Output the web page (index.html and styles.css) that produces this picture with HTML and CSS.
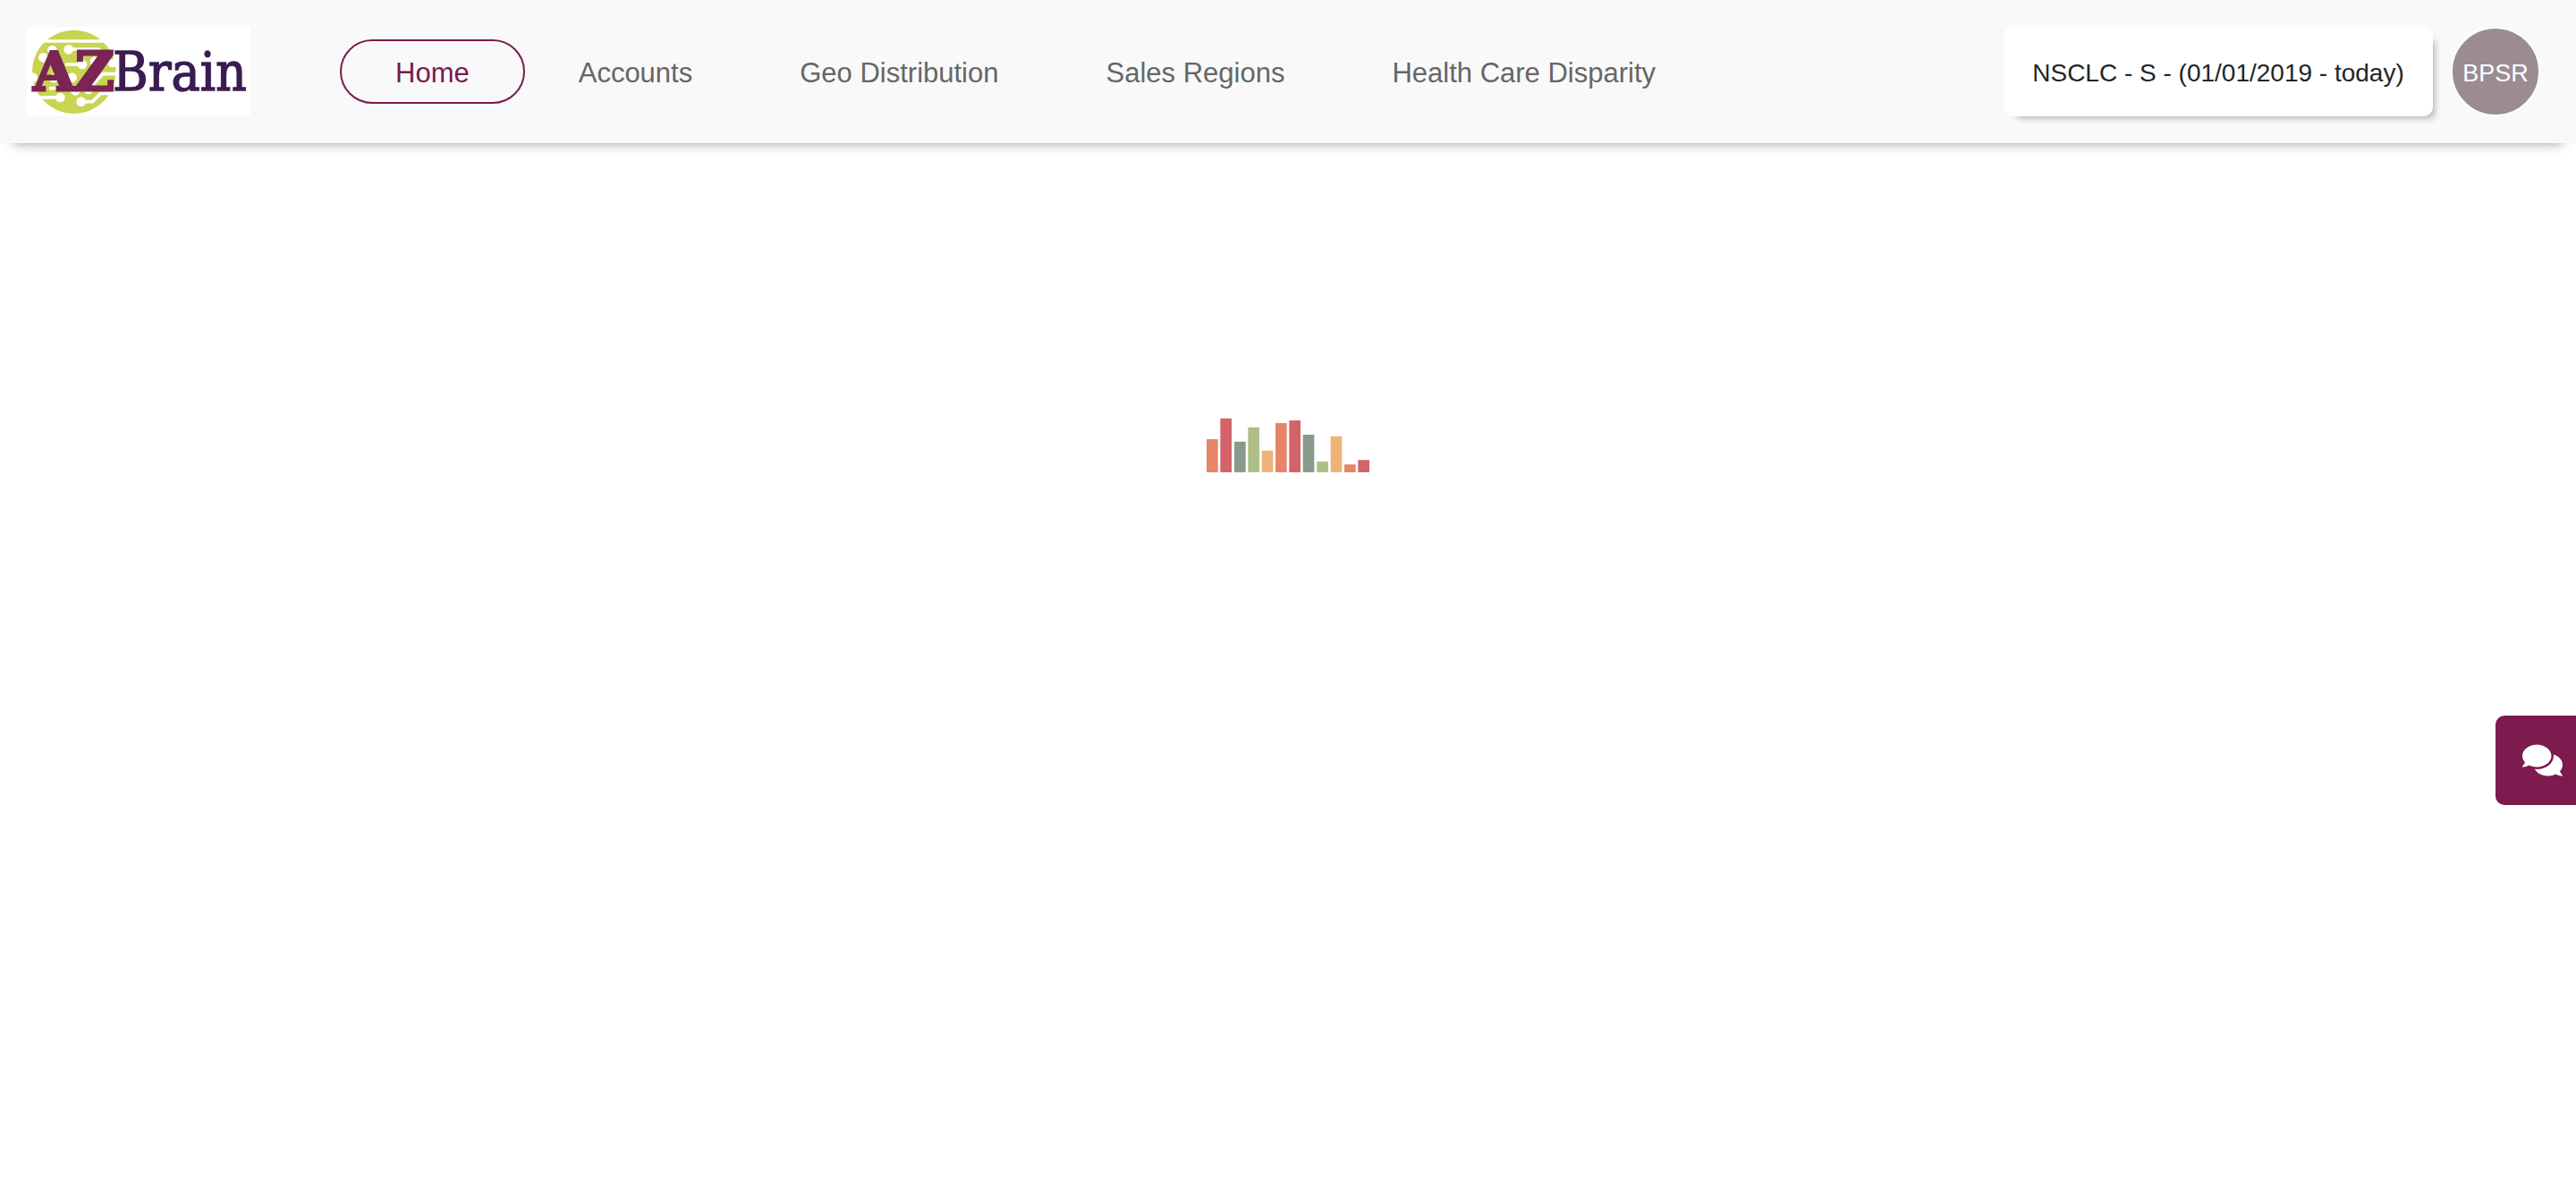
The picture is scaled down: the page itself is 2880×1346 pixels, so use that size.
FILE: index.html
```html
<!DOCTYPE html>
<html lang="en">
<head>
<meta charset="utf-8">
<title>AZBrain</title>
<link rel="stylesheet" href="styles.css">
</head>
<body>
<header class="topbar">
  <a class="logo" href="#" aria-label="AZBrain">
    <svg class="logo-art" viewBox="90 90 750 300">
      <circle cx="248" cy="241" r="140" fill="#c8d452"/>
      <g fill="none" stroke="#fff" stroke-width="11">
        <path d="M140 138H350"/>
        <path d="M230 165H330L352 184"/>
        <path d="M220 216H275"/>
        <path d="M310 285L345 248H400"/>
        <path d="M165 296H200"/>
        <path d="M130 327H202"/>
        <path d="M272 341H310L338 313H372"/>
      </g>
      <g fill="#fff">
        <circle cx="175" cy="168" r="16"/>
        <circle cx="145" cy="193" r="16"/>
        <circle cx="230" cy="166" r="16"/>
        <circle cx="276" cy="216" r="16"/>
        <circle cx="318" cy="206" r="16"/>
        <circle cx="376" cy="212" r="14"/>
        <circle cx="110" cy="260" r="16"/>
        <circle cx="180" cy="262" r="16"/>
        <circle cx="242" cy="260" r="16"/>
        <circle cx="253" cy="304" r="16"/>
        <circle cx="296" cy="300" r="16"/>
        <circle cx="202" cy="327" r="16"/>
        <circle cx="272" cy="341" r="16"/>
      </g>
      <text class="logo-az" x="112" y="303">AZ</text>
      <text class="logo-brain" x="378" y="303">Brain</text>
    </svg>
  </a>
  <nav class="nav">
    <a class="nav-link active" href="#">Home</a>
    <a class="nav-link" href="#">Accounts</a>
    <a class="nav-link" href="#">Geo Distribution</a>
    <a class="nav-link" href="#">Sales Regions</a>
    <a class="nav-link" href="#">Health Care Disparity</a>
  </nav>
  <button class="filter" type="button">NSCLC - S - (01/01/2019 - today)</button>
  <button class="avatar" type="button">BPSR</button>
</header>
<main class="content">
  <svg class="loader" viewBox="57 51 546 183" role="img" aria-label="Loading">
    <g fill="#e68568"><path d="M57 123h38v111h-38zM288 69h38v165h-38zM519 208h38v26h-38z"/></g>
    <g fill="#d26469"><path d="M103 53h38v181h-38zM334 60h38v174h-38zM565 193h38v41h-38z"/></g>
    <g fill="#889b8b"><path d="M150 131h38v103h-38zM380 108h38v126h-38z"/></g>
    <g fill="#afbe88"><path d="M196 83h38v151h-38zM427 198h38v36h-38z"/></g>
    <g fill="#efb378"><path d="M242 161h38v73h-38zM473 113h38v121h-38z"/></g>
  </svg>
</main>
<button class="chat" type="button" aria-label="Chat">
  <svg class="chat-icon" viewBox="0 0 576 512"><path fill="currentColor" d="M416 192c0-88.4-93.1-160-208-160S0 103.6 0 192c0 34.3 14.1 65.9 38 92-13.4 30.2-35.5 54.2-35.8 54.5-2.2 2.3-2.8 5.7-1.5 8.7S4.8 352 8 352c36.6 0 66.9-12.3 88.7-25 32.2 15.7 70.3 25 111.3 25 114.9 0 208-71.6 208-160zm122 220c23.9-26 38-57.7 38-92 0-66.9-53.5-124.2-129.3-148.1.9 6.6 1.3 13.3 1.3 20.1 0 105.9-107.7 192-240 192-10.8 0-21.3-.8-31.7-1.9C207.8 439.6 281.8 480 368 480c41 0 79.1-9.2 111.3-25 21.8 12.7 52.1 25 88.7 25 3.2 0 6.1-1.9 7.3-4.8 1.3-2.9.7-6.3-1.5-8.7-.3-.3-22.4-24.2-35.8-54.5z"/></svg>
</button>
</body>
</html>
```
FILE: styles.css
```css
* {
  box-sizing: border-box;
}

body {
  margin: 0;
  background: #fff;
  color: #212529;
  font-family: "Liberation Sans", Arial, sans-serif;
}

button {
  font-family: inherit;
  cursor: pointer;
}

.topbar {
  display: flex;
  align-items: center;
  gap: 20px;
  padding: 30px 40px 30px 30px;
  background: #f9f9f9;
  box-shadow: 0 16px 12px -15px rgba(0, 0, 0, 0.35);
}

.logo {
  display: block;
  width: 250px;
  height: 100px;
  background: #fff;
}

.logo-art {
  display: block;
  width: 100%;
  height: 100%;
}

.logo-az {
  fill: #7a2553;
  stroke: #7a2553;
  stroke-width: 9px;
  font: bold 180px "DejaVu Serif", serif;
}

.logo-brain {
  fill: #3a1c52;
  stroke: #3a1c52;
  stroke-width: 4px;
  font: 180px "DejaVu Serif Condensed", "DejaVu Serif", serif;
}

.nav {
  display: flex;
  flex: 1;
  align-items: center;
  padding-left: 80px;
}

.nav-link {
  padding: 4px 60px 0;
  color: #666;
  font-size: 31px;
  line-height: 64px;
  text-decoration: none;
  white-space: nowrap;
}

.nav-link.active {
  border: 2px solid #7a1a4e;
  border-radius: 36px;
  color: #7a1a4e;
}

.filter {
  width: 480px;
  height: 100px;
  padding: 4px 0 0;
  border: 0;
  border-radius: 10px;
  background: #fff;
  box-shadow: 8px 8px 8px -7px rgba(0, 0, 0, 0.35);
  color: #212529;
  font-size: 28px;
  white-space: nowrap;
}

.avatar {
  width: 100px;
  height: 100px;
  padding: 4px 0 0;
  border: 2px solid #fff;
  border-radius: 50%;
  background: #9b8c94;
  color: #fff;
  font-size: 27px;
}

.content {
  display: flex;
  justify-content: center;
  padding-top: 307px;
}

.loader {
  width: 182px;
  height: 61px;
}

.chat {
  position: fixed;
  top: calc(50% + 127px);
  right: 0;
  display: flex;
  align-items: center;
  width: 90px;
  height: 100px;
  padding: 0 0 0 30px;
  border: 0;
  border-radius: 10px 0 0 10px;
  background: #7d1a4e;
  color: #fff;
}

.chat-icon {
  width: 45px;
  height: 40px;
}
```
